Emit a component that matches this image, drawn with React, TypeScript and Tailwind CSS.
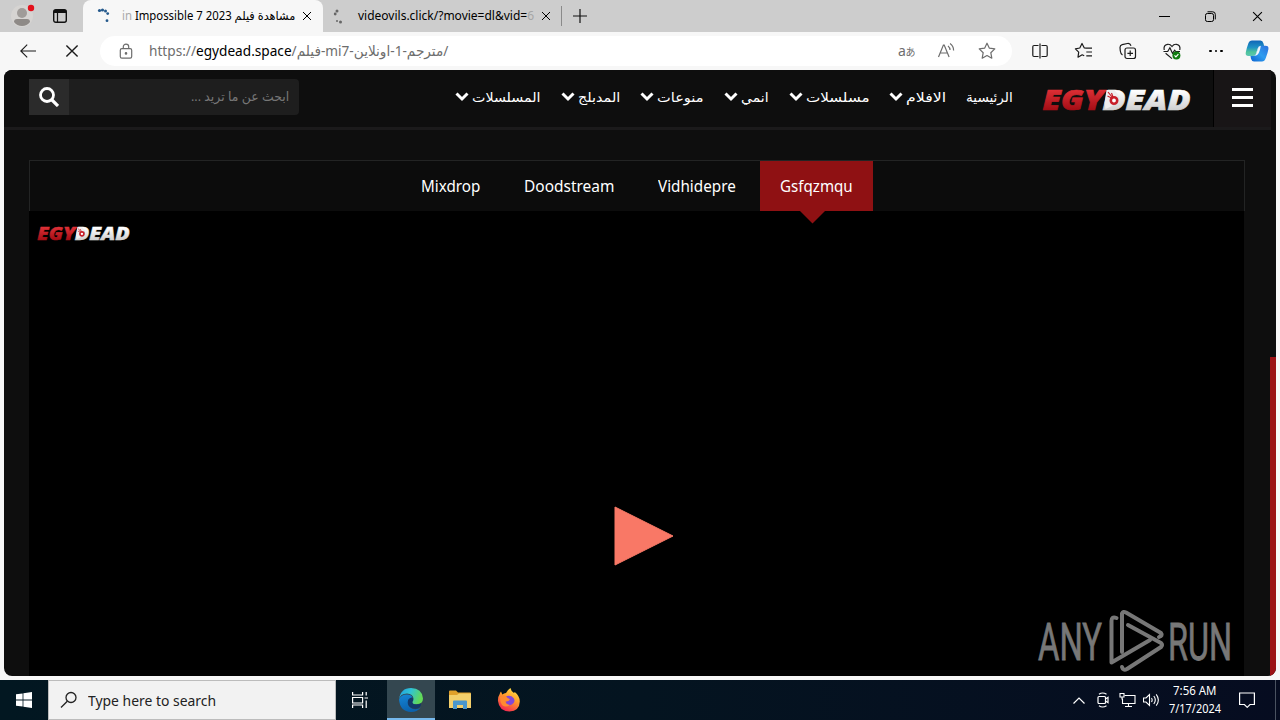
import { ReactNode, useLayoutEffect, useRef, useState } from 'react'
import { clsx } from 'clsx'

interface FitProps {
    className?: string
    rtl?: boolean
    children: ReactNode
}

// One line of text, condensed or stretched to the width of its box
function Fit({ className, rtl = false, children }: FitProps) {
    const box = useRef<HTMLSpanElement>(null)
    const text = useRef<HTMLSpanElement>(null)
    const [scale, setScale] = useState(1)

    useLayoutEffect(() => {
        if (box.current && text.current) {
            setScale(box.current.clientWidth / text.current.offsetWidth)
        }
    }, [])

    return (
        <span ref={box} dir="ltr" className={clsx('block shrink-0 whitespace-nowrap', className)}>
            <span
                ref={text}
                dir={rtl ? 'rtl' : 'ltr'}
                className="inline-block origin-left"
                style={{ transform: `scaleX(${scale})` }}
            >
                {children}
            </span>
        </span>
    )
}

function Stroke({ className, children }: { className?: string; children: ReactNode }) {
    return (
        <svg
            viewBox="0 0 20 20"
            fill="none"
            stroke="currentColor"
            strokeWidth="1.2"
            className={clsx('shrink-0 size-5', className)}
        >
            {children}
        </svg>
    )
}

function CloseIcon({ className }: { className?: string }) {
    return (
        <svg viewBox="0 0 10 10" stroke="currentColor" strokeWidth="1" className={clsx('shrink-0', className)}>
            <path d="M1 1l8 8M9 1L1 9" />
        </svg>
    )
}

function TabBar() {
    return (
        <div className="flex h-8 bg-[#cdcdcd]">
            <div className="flex w-[83px] items-center rounded-br-lg">
                <svg viewBox="0 0 24 24" className="ml-[11px] size-6">
                    <circle cx="11" cy="12" r="11" fill="#d6d4d2" />
                    <circle cx="11" cy="9" r="5" fill="#a09c99" />
                    <path d="M3 18q0-3 3-3h10q3 0 3 3-3 4-8 4t-8-4z" fill="#8e8a87" />
                    <circle cx="20" cy="4" r="3.2" fill="#e3101b" />
                </svg>
                <svg viewBox="0 0 14 14" fill="none" stroke="#111" className="ml-[18px] size-3.5">
                    <rect x=".7" y=".7" width="12.6" height="12.6" rx="2" strokeWidth="1.4" />
                    <path d="M1 2.5h12" strokeWidth="3" />
                    <path d="M4.5 3v10" strokeWidth="1.2" />
                </svg>
            </div>
            <div className="flex w-[240px] items-center rounded-t-lg bg-[#f7f7f7]">
                <svg viewBox="0 0 14 16" fill="#24598c" className="ml-[14px] h-4 w-3.5">
                    <circle cx="2.5" cy="2.5" r="1.6" />
                    <circle cx="5.5" cy="2" r="1.6" />
                    <circle cx="8.5" cy="3" r="1.5" />
                    <circle cx="10.7" cy="5.6" r="1.4" />
                    <circle cx="10" cy="12.7" r="1.4" />
                </svg>
                <Fit className="ml-[11px] w-[173px] text-[12px] leading-4 text-black">
                    <span className="text-[#aaa]">in</span> Impossible 7 2023 مشاهدة فيلم
                </Fit>
                <CloseIcon className="ml-[7px] size-2.5" />
            </div>
            <div className="flex w-[238px] items-center">
                <svg viewBox="0 0 10 16" fill="#666" className="ml-2.5 h-4 w-2.5">
                    <circle cx="4" cy="3" r="1.5" />
                    <circle cx="2.2" cy="6" r="1.4" />
                    <circle cx="4" cy="13" r="1" />
                    <circle cx="7.5" cy="14" r="1.5" />
                </svg>
                <Fit className="ml-[15px] w-[176px] text-[12px] leading-4 text-black">
                    videovils.click/?movie=dl&amp;vid=<span className="text-[#a5a5a5]">6</span>
                </Fit>
                <CloseIcon className="ml-[7px] size-2.5" />
            </div>
            <div className="mt-1.5 h-5 w-px bg-[#8a8a8a]" />
            <svg viewBox="0 0 14 14" stroke="#111" strokeWidth="1.2" className="mt-[9px] ml-[11px] size-3.5">
                <path d="M7 0v14M0 7h14" />
            </svg>
            <div className="ml-auto flex items-center pr-[17px] text-black">
                <div className="h-px w-[11px] bg-black" />
                <svg viewBox="0 0 11 11" fill="none" stroke="currentColor" className="ml-[35px] size-[11px]">
                    <rect x=".5" y="2.5" width="8" height="8" rx="1.8" />
                    <path d="M2.5.8h5.2q2.6 0 2.6 2.6v5" />
                </svg>
                <CloseIcon className="ml-9 size-[11px]" />
            </div>
        </div>
    )
}

function Toolbar() {
    return (
        <div className="flex h-[38px] items-center bg-[#f7f7f7] text-[#1b1b1b]">
            <svg viewBox="0 0 16 14" fill="none" stroke="currentColor" strokeWidth="1.1" className="ml-5 h-3.5 w-4">
                <path d="M16 7H.8M7.2.6L.8 7l6.4 6.4" />
            </svg>
            <CloseIcon className="ml-[29px] size-[14px]" />
            <div className="ml-[21px] flex h-[30px] w-[912px] items-center rounded-full bg-white text-[#6d6d6d]">
                <svg viewBox="0 0 14 16" fill="none" stroke="currentColor" strokeWidth="1.2" className="ml-[19px] h-4 w-3.5">
                    <rect x="1.3" y="5.6" width="11.4" height="9.6" rx="1.6" />
                    <path d="M4.3 5.5V3.8a2.7 2.7 0 0 1 5.4 0v1.7" />
                    <circle cx="7" cy="10.4" r=".7" fill="currentColor" />
                </svg>
                <Fit className="ml-4 w-[299px] text-[14px] leading-5">
                    https://<span className="text-black">egydead.space</span>/
                    <bdi>فيلم</bdi>-mi7-<bdi>اونلاين</bdi>-1-<bdi>مترجم</bdi>/
                </Fit>
                <div className="ml-auto flex items-center">
                    <span className="w-[17px] text-[14px] leading-4 tracking-tight whitespace-nowrap">
                        a<span className="text-[10px]">あ</span>
                    </span>
                    <Stroke className="ml-[22px]">
                        <path d="M1.5 16L6.4 4h.8l4.9 12M3.2 12h7.2M11 5q2 1.6 2 4M13 2.5q3.6 2.4 3.6 7" />
                    </Stroke>
                    <Stroke className="mr-[15px] ml-5">
                        <path
                            d="M10 2.2l2.4 5 5.4.7-4 3.8 1 5.5-4.8-2.7-4.8 2.7 1-5.5-4-3.8 5.4-.7z"
                            strokeLinejoin="round"
                        />
                    </Stroke>
                </div>
            </div>
            <Stroke className="ml-[18px]">
                <path d="M8.5 4.5H4Q2.8 4.5 2.8 5.7v8.6q0 1.2 1.2 1.2h4.5M11.5 4.5H16q1.2 0 1.2 1.2v8.6q0 1.2-1.2 1.2h-4.5M10 2.5v15" />
            </Stroke>
            <Stroke className="ml-6">
                <path
                    d="M12 7.2L10.3 7 8 2.5 5.8 7l-4.4.8 3.3 3.4-.7 5 4.2-2.4 2 1M12 7.2h6M12.3 11H18M12.3 14.8H18"
                    strokeLinejoin="round"
                />
            </Stroke>
            <Stroke className="ml-6">
                <rect x="7" y="7" width="10.5" height="10.5" rx="2" />
                <path d="M12.2 9.5v5.6M9.4 12.3H15M4.5 14Q2.7 13 2.3 10L2 6.5Q2 4.3 4.2 3.7l5.2-1.2Q12 2 13 4.7" />
            </Stroke>
            <Stroke className="ml-6">
                <path d="M2.2 9Q1.2 4 5.5 3.3 8.2 3 10 5.5 11.8 3 14.5 3.3 18.8 4 17.8 9M3.6 12.3L10 17.6M1.5 10.5h4.2l2.2-3.7 2.6 5.6 2.2-3.2 1 1.3H18" />
                <circle cx="14.4" cy="14.4" r="4" fill="#107c10" stroke="none" />
                <path d="M12.5 14.4l1.4 1.4 2.5-2.6" stroke="#fff" />
            </Stroke>
            <div className="ml-[27px] flex gap-[3px]">
                <i className="size-[2.5px] rounded-full bg-black" />
                <i className="size-[2.5px] rounded-full bg-black" />
                <i className="size-[2.5px] rounded-full bg-black" />
            </div>
            <svg viewBox="0 0 24 22" className="ml-[22px] h-[22px] w-6">
                <defs>
                    <linearGradient id="copilotLeft" x1="0" y1="0" x2="0" y2="1">
                        <stop offset="0" stopColor="#0f66b8" />
                        <stop offset=".45" stopColor="#1f93c4" />
                        <stop offset=".75" stopColor="#4fc49a" />
                        <stop offset="1" stopColor="#5cc6b4" />
                    </linearGradient>
                    <linearGradient id="copilotRight" x1="1" y1="0" x2="0" y2="1">
                        <stop offset="0" stopColor="#2c6fdc" />
                        <stop offset=".5" stopColor="#2f9df0" />
                        <stop offset="1" stopColor="#0b63d0" />
                    </linearGradient>
                </defs>
                <path d="M7 .5h8.5q2.2 0 3 3l.6 2.5h-3.6q-2 0-2.7 2.2l-2 6Q10.3 16 8 16H3.5Q0 16 .8 12.2 1.5 8.5 3.3 3.5 4.3.5 7 .5z" fill="url(#copilotLeft)" />
                <path d="M17 21.5H9q-2.2 0-3-2.8L5.5 16H8q2.5 0 3.2-2.2l2-5.8q.8-2.2 2.8-2.2h4.5q3.5 0 2.9 3.4-.6 3.5-2.6 8.8-1.2 3.5-3.8 3.5z" fill="url(#copilotRight)" />
                <path d="M9.500 16q1.500-1 2.200-3.500l1.500-4.500q.6-2 2.600-2.200-.3 3-1.600 6.200-1.200 3.500-4.700 4z" fill="#f1f7fb" />
            </svg>
        </div>
    )
}

function Logo({ id, className }: { id: string; className: string }) {
    return (
        <svg viewBox="0 0 148 24" className={clsx('shrink-0 overflow-visible', className)}>
            <defs>
                <linearGradient id={`${id}Red`} x1="0" y1="0" x2="0" y2="1">
                    <stop offset=".2" stopColor="#e5343a" />
                    <stop offset=".8" stopColor="#a30d15" />
                </linearGradient>
                <linearGradient id={`${id}White`} x1="0" y1="0" x2="0" y2="1">
                    <stop offset=".3" stopColor="#fff" />
                    <stop offset=".8" stopColor="#cfcfcf" />
                </linearGradient>
            </defs>
            <g fontFamily="Open Sans" fontWeight="800" fontStyle="italic" fontSize="29" strokeWidth=".7">
                <text
                    x="0"
                    y="22"
                    textLength="61"
                    lengthAdjust="spacingAndGlyphs"
                    fill={`url(#${id}Red)`}
                    stroke={`url(#${id}Red)`}
                >
                    EGY
                </text>
                <text
                    x="60"
                    y="22"
                    textLength="88"
                    lengthAdjust="spacingAndGlyphs"
                    fill={`url(#${id}White)`}
                    stroke={`url(#${id}White)`}
                >
                    DEAD
                </text>
            </g>
            <path d="M64 2h8l4 5-2 9-11 5-1-6z" fill="#eee" />
            <circle cx="71.5" cy="12.5" r="3.2" fill="#fff" stroke="#c8202a" strokeWidth="2.6" />
            <path d="M65.5 4l4 5M69 5l1.5 4M65 8l4 2" stroke="#c8202a" strokeWidth="1.2" />
        </svg>
    )
}

const navItems = [
    { label: 'الرئيسية', width: 'w-[47px]', menu: false },
    { label: 'الافلام', width: 'w-[40px]', menu: true },
    { label: 'مسلسلات', width: 'w-[63px]', menu: true },
    { label: 'انمي', width: 'w-[28px]', menu: true },
    { label: 'منوعات', width: 'w-[47px]', menu: true },
    { label: 'المدبلج', width: 'w-[42px]', menu: true },
    { label: 'المسلسلات', width: 'w-[69px]', menu: true },
]

function SiteHeader() {
    return (
        <header className="flex h-[60px] w-[1267px] border-b-[3px] border-[#1b1a1b] bg-[#0e0e0e]">
            <div className="mt-[9px] ml-[25px] flex h-9 w-[270px] rounded-sm bg-[#1e1e1e]">
                <div className="flex w-10 items-center justify-center bg-[#2b2b2b]">
                    <svg viewBox="0 0 20 20" fill="none" stroke="#fff" strokeWidth="2.8" className="size-5">
                        <circle cx="8" cy="8" r="6.5" />
                        <path d="M12.5 12.5l6.5 6.5" strokeWidth="3.2" />
                    </svg>
                </div>
                <Fit rtl className="mt-2 ml-[122px] w-[98px] text-[13px] leading-[18px] text-[#777]">
                    ابحث عن ما تريد ...
                </Fit>
            </div>
            <nav dir="rtl" className="mt-[18px] mr-[29px] ml-auto flex h-[19px] items-center gap-5 text-white">
                {navItems.map((item) => (
                    <a key={item.label} className="flex items-center gap-[3px]">
                        <Fit rtl className={clsx(item.width, 'text-[13px] leading-[19px]')}>
                            {item.label}
                        </Fit>
                        {item.menu && (
                            <svg viewBox="0 0 14 10" fill="none" stroke="#fff" strokeWidth="3" className="-mt-0.5 h-2.5 w-3.5">
                                <path d="M1.5 1.5L7 7l5.5-5.5" />
                            </svg>
                        )}
                    </a>
                ))}
            </nav>
            <Logo id="head" className="mt-[18px] mr-[22px] h-6 w-[149px]" />
            <div className="flex w-[58px] flex-col items-center gap-1 border-l border-black bg-[#181516] pt-[18px]">
                <i className="h-[3px] w-[21px] bg-white" />
                <i className="mt-px h-[3px] w-[21px] bg-white" />
                <i className="mt-px h-[3px] w-[21px] bg-white" />
            </div>
        </header>
    )
}

const servers = [
    { name: 'Mixdrop', width: 'w-[59px]' },
    { name: 'Doodstream', width: 'w-[90px]' },
    { name: 'Vidhidepre', width: 'w-[78px]' },
]

function Player() {
    return (
        <main className="mx-[25px] mt-[30px] w-[1216px]">
            <div className="flex h-[51px] border border-b-0 border-[#232424] bg-[#0c0c0c] pl-[371px] text-[17px] text-white">
                <div className="flex gap-1">
                    {servers.map((server) => (
                        <div key={server.name} className="flex items-center px-5">
                            <Fit className={server.width}>{server.name}</Fit>
                        </div>
                    ))}
                    <div className="relative flex items-center bg-[#8f1113] px-5">
                        <Fit className="w-[73px]">Gsfqzmqu</Fit>
                        <svg viewBox="0 0 26 13" className="absolute top-[50px] left-10 h-[13px] w-[26px]">
                            <path d="M0 0h25L12.5 12.5z" fill="#8f1113" />
                        </svg>
                    </div>
                </div>
            </div>
            <div className="flex h-[465px] w-[1215px] items-start bg-black">
                <Logo id="player" className="mt-[15px] ml-2 h-[15px] w-[93px]" />
                <svg viewBox="0 0 60 60" className="mt-[295px] ml-[484px] size-[60px]">
                    <path
                        d="M1 1l58 29L1 59z"
                        fill="#f97866"
                        stroke="#f97866"
                        strokeWidth="1"
                        strokeLinejoin="round"
                    />
                </svg>
                <Watermark />
            </div>
        </main>
    )
}

function Watermark() {
    return (
        <svg viewBox="0 0 194 64" className="mt-[398px] mr-3 ml-auto h-16 w-[194px] overflow-visible text-[#777]">
            <g fill="currentColor" stroke="currentColor" strokeWidth=".8" fontFamily="Roboto" fontSize="52">
                <text x="0" y="50.5" textLength="64" lengthAdjust="spacingAndGlyphs">
                    ANY
                </text>
                <text x="130" y="50.5" textLength="64" lengthAdjust="spacingAndGlyphs">
                    RUN
                </text>
            </g>
            <g fill="none" stroke="currentColor" strokeWidth="4" strokeLinecap="round" strokeLinejoin="round">
                <path d="M78.500 9q-5-2-5 3v41.500L112 31" />
                <path d="M84 43V4.500Q85 2 88 3.500L123 24q2 2.500-2 4" />
                <path d="M90 16l33 18q2 2 0 4L89 60q-4 2-5-2" />
            </g>
        </svg>
    )
}

function Taskbar() {
    return (
        <div className="flex h-10 bg-linear-to-r from-[#021721] via-[#041420] to-[#060c20] text-white">
            <div className="flex w-12 items-center justify-center">
                <svg viewBox="0 0 16 16" fill="#fff" className="size-4">
                    <path d="M0 2.3l6.6-.9v6.2H0zM7.4 1.3L16 0v7.6H7.4zM0 8.4h6.6v6.2L0 13.7zM7.4 8.4H16V16l-8.6-1.3z" />
                </svg>
            </div>
            <div className="flex w-72 items-center border border-[#bcbcbc] bg-[#f2f2f2] text-[#222]">
                <svg viewBox="0 0 18 18" fill="none" stroke="#222" strokeWidth="1.3" className="ml-[11px] size-[18px]">
                    <circle cx="11" cy="6.5" r="5" />
                    <path d="M7.3 10.2L1 16.5" />
                </svg>
                <Fit className="ml-[10px] w-[128px] text-[15px] leading-5">Type here to search</Fit>
            </div>
            <div className="flex w-[51px] items-center justify-center pr-[3px]">
                <svg viewBox="0 0 16 16" fill="none" stroke="#fff" strokeWidth="1.2" className="size-4">
                    <path d="M.6 0v3h10V0M.6 16v-3h10v3M.6 5.5h10V11H.6zM14.2 0v3.5M14.2 8.5V16M12.5 6H16" />
                </svg>
            </div>
            <div className="flex w-12 items-center justify-center border-b-2 border-[#76b9ed] bg-[#344750]">
                <svg viewBox="0 0 24 24" className="mt-0.5 size-6">
                    <defs>
                        <linearGradient id="edgeTop" x1="0" y1="0" x2="1" y2=".3">
                            <stop offset="0" stopColor="#1f9fe0" />
                            <stop offset=".5" stopColor="#30c3d5" />
                            <stop offset="1" stopColor="#62d957" />
                        </linearGradient>
                        <linearGradient id="edgeBody" x1="0" y1="0" x2=".3" y2="1">
                            <stop offset="0" stopColor="#1585d5" />
                            <stop offset="1" stopColor="#0b62ae" />
                        </linearGradient>
                    </defs>
                    <path d="M0 11.5Q1 5.5 8 5.5q6 .3 6.5 5 0 2-1.2 3.2-.6 2.5 4.2 2.6Q24 16 24 10.500 23 0 12 0 1.500 0 0 11.500z" fill="url(#edgeTop)" />
                    <path d="M0 11.5Q1.8 6.5 8 6.5q4.500 0 5.800 3-5 .5-5 5.500 1 6 7.500 6.200 3 0 5.500-1.700Q18 24 12 24 1 23.500 0 11.500z" fill="url(#edgeBody)" />
                    <path d="M8.8 13.5Q9.300 10 13.200 9.600q1.800 2 .2 4.200-.6 2.700 4.200 2.700 2.500 0 4.200-1 .8 2.500-2 4.200-3 1.700-6.500.5-5-2-4.500-6.700z" fill="#12386b" />
                </svg>
            </div>
            <div className="flex w-[49px] items-center justify-center">
                <svg viewBox="0 0 22 20" className="h-5 w-[22px]">
                    <path d="M0 1.5Q0 .5 1 .5h6l2 2h12q1 0 1 1V18H0z" fill="#e0a02a" />
                    <path d="M0 5h8l2-1.5h12V18H0z" fill="#f3cf6b" />
                    <path d="M4 19v-7.5q0-1 1-1h12q1 0 1 1V19h-4v-4H8v4z" fill="#4a97cc" />
                </svg>
            </div>
            <div className="flex w-[50px] items-center justify-center">
                <svg viewBox="0 0 24 24" className="size-6">
                    <defs>
                        <linearGradient id="fox" x1=".8" y1="0" x2=".3" y2="1">
                            <stop offset="0" stopColor="#ffe647" />
                            <stop offset=".45" stopColor="#ff9a2b" />
                            <stop offset="1" stopColor="#f32352" />
                        </linearGradient>
                    </defs>
                    <path d="M4 3.5l1.3 3Q7 5 9 5q2-3.500 4.500-5 .2 2.500 3.500 5l.8-1q5 4 5 9.500Q22.500 23 12.500 23.500 2 23 1 13q-.3-4 1.500-6.500Q3 4.500 4 3.500z" fill="url(#fox)" />
                    <path d="M7 10q3-3.500 7.500-1.800 4.500 2.600 2.300 6.600-2.600 3.600-6.800 1.700-2.500-1.500-1.800-3.500 2.500.8 4-1.500Q9 11.500 7 10z" fill="#8148d8" />
                    <path d="M3 9q3-2.500 6-1 1 2.500 4 3-1 2.500-4.500 2.500.5 3 4.500 3.500-4.500 3-8 0Q3 14 3 9z" fill="#ff8a30" />
                </svg>
            </div>
            <div className="ml-auto flex items-center">
                <svg viewBox="0 0 12 7" fill="none" stroke="#fff" strokeWidth="1.2" className="h-[7px] w-3">
                    <path d="M.5 6.5L6 1l5.5 5.5" />
                </svg>
                <svg viewBox="0 0 12 16" fill="none" stroke="#fff" strokeWidth="1.2" className="ml-3 h-4 w-3">
                    <rect x="1" y="4.5" width="7.5" height="7" rx="1" />
                    <path d="M8.5 7L11 5.300v5.400L8.500 9M2 2.300q3.500-2.600 7.500 0M2 13.700q3.500 2.600 7.500 0" />
                </svg>
                <svg viewBox="0 0 17 14" fill="none" stroke="#fff" strokeWidth="1.1" className="ml-2.5 h-3.5 w-[17px]">
                    <path d="M5.5 2.5H16v8H3.5v-5M9.5 10.5v3M6 13.5h7" />
                    <path d="M1 .5h4V4H1zM3 4v2.5" />
                </svg>
                <svg viewBox="0 0 17 14" fill="none" stroke="#fff" strokeWidth="1.1" className="ml-[7px] h-3.5 w-[17px]">
                    <path d="M.5 5H3l3.5-3.5v11L3 9H.5zM8.5 5q1.3 2 0 4M10.8 3q3 4 0 8M13.2 1.3q4.3 5.7 0 11.4" />
                </svg>
                <div className="ml-[9px] flex w-[52px] flex-col items-center text-[12px] leading-[18px]">
                    <Fit className="mr-0.5 w-[43px]">7:56 AM</Fit>
                    <Fit className="w-[52px]">7/17/2024</Fit>
                </div>
                <svg viewBox="0 0 16 16" fill="none" stroke="#fff" strokeWidth="1.2" className="ml-[18px] size-4">
                    <path d="M.6 1h14.8v11.5H11l-2.800 2.800-2.800-2.800H.6z" />
                </svg>
                <div className="ml-5 h-10 w-px bg-[#4a5260]" />
                <div className="w-1" />
            </div>
        </div>
    )
}

export default function App() {
    return (
        <div className="flex h-[720px] w-[1280px] flex-col overflow-hidden bg-[#f7f7f7] font-['Noto_Sans','DejaVu_Sans','Noto_Sans_CJK_JP',sans-serif]">
            <TabBar />
            <Toolbar />
            <div className="mx-1 mb-1 flex h-[606px] overflow-hidden rounded-lg bg-[#0e0e0e]">
                <div className="w-[1266px]">
                    <SiteHeader />
                    <Player />
                </div>
                <div className="mt-[287px] w-1.5 bg-[#9c1215]" />
            </div>
            <Taskbar />
        </div>
    )
}
